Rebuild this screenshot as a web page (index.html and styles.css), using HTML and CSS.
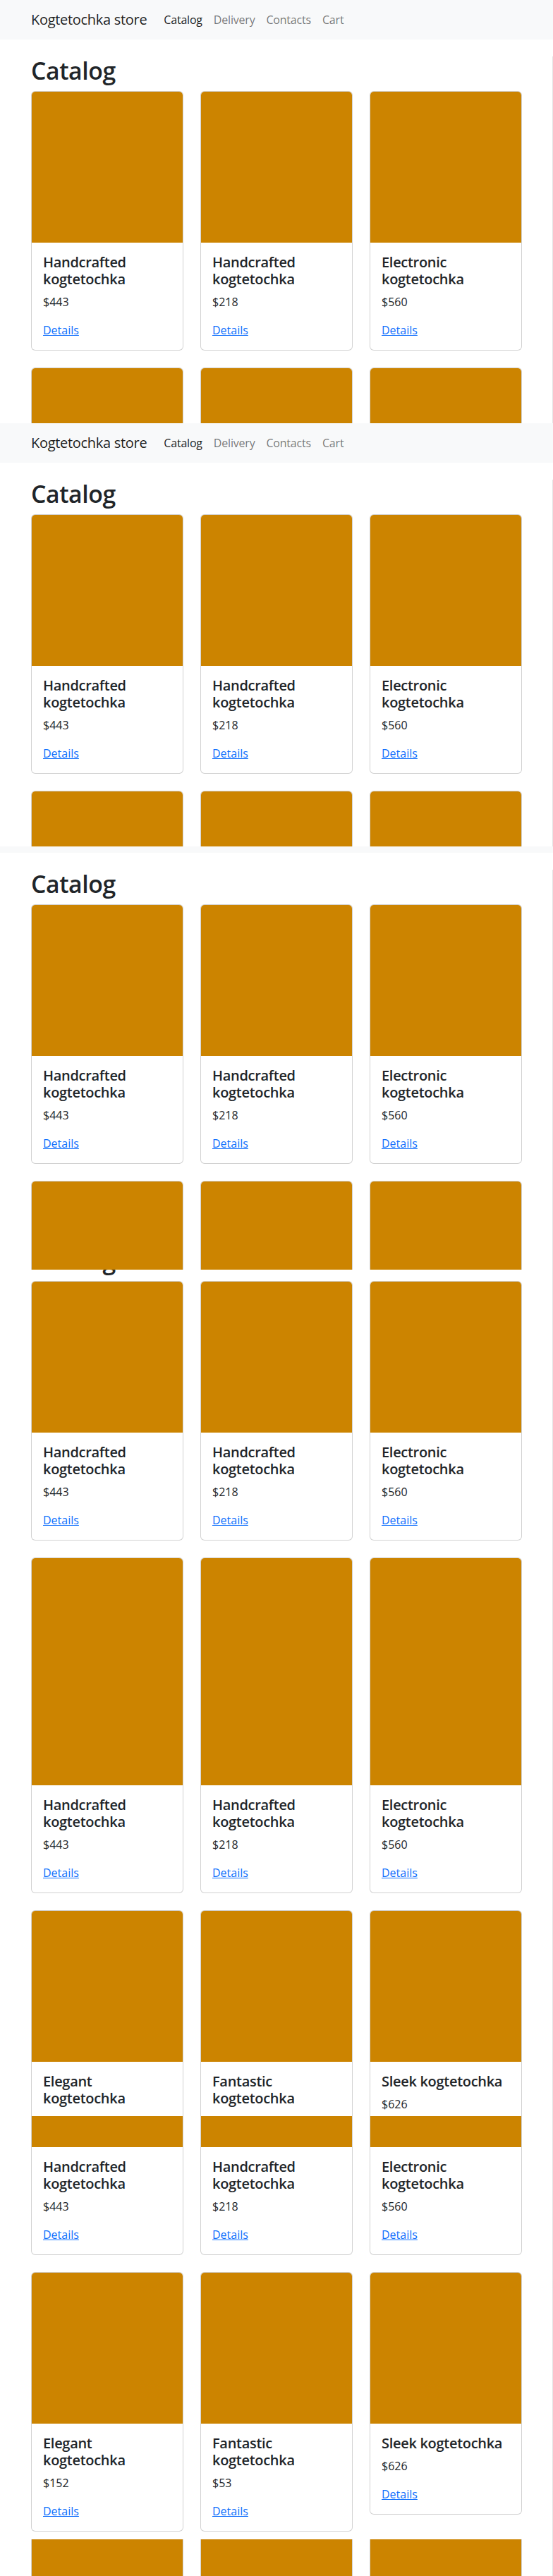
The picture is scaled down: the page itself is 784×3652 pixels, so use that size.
FILE: index.html
```html
<!DOCTYPE html>
<html lang="en">
<head>
<meta charset="utf-8">
<title>Kogtetochka store — Catalog</title>
<link rel="stylesheet" href="styles.css">
</head>
<body>

<!-- capture 1: scrolled to top -->
<div class="shot shot-full">
  <div class="page scroll-0">
    <nav class="navbar"><div class="nav-inner"><a class="brand" href="#">Kogtetochka store</a><ul class="nav-links"><li><a class="nav-link active" href="#">Catalog</a></li><li><a class="nav-link" href="#">Delivery</a></li><li><a class="nav-link" href="#">Contacts</a></li><li><a class="nav-link" href="#">Cart</a></li></ul></div></nav>
    <main class="main-area"><div class="container">
      <h1 class="title">Catalog</h1>
      <div class="grid">
        <div class="card"><div class="card-img"></div><div class="card-body"><h5 class="card-title">Handcrafted kogtetochka</h5><p class="card-price">$443</p><a class="card-link" href="#">Details</a></div></div>
        <div class="card"><div class="card-img"></div><div class="card-body"><h5 class="card-title">Handcrafted kogtetochka</h5><p class="card-price">$218</p><a class="card-link" href="#">Details</a></div></div>
        <div class="card"><div class="card-img"></div><div class="card-body"><h5 class="card-title">Electronic kogtetochka</h5><p class="card-price">$560</p><a class="card-link" href="#">Details</a></div></div>
        <div class="card"><div class="card-img"></div><div class="card-body"><h5 class="card-title">Elegant kogtetochka</h5><p class="card-price">$152</p><a class="card-link" href="#">Details</a></div></div>
        <div class="card"><div class="card-img"></div><div class="card-body"><h5 class="card-title">Fantastic kogtetochka</h5><p class="card-price">$53</p><a class="card-link" href="#">Details</a></div></div>
        <div class="card"><div class="card-img"></div><div class="card-body"><h5 class="card-title">Sleek kogtetochka</h5><p class="card-price">$626</p><a class="card-link" href="#">Details</a></div></div>
      </div>
    </div></main>
  </div>
</div>

<!-- capture 2: scrolled to top -->
<div class="shot shot-full">
  <div class="page scroll-0">
    <nav class="navbar"><div class="nav-inner"><a class="brand" href="#">Kogtetochka store</a><ul class="nav-links"><li><a class="nav-link active" href="#">Catalog</a></li><li><a class="nav-link" href="#">Delivery</a></li><li><a class="nav-link" href="#">Contacts</a></li><li><a class="nav-link" href="#">Cart</a></li></ul></div></nav>
    <main class="main-area"><div class="container">
      <h1 class="title">Catalog</h1>
      <div class="grid">
        <div class="card"><div class="card-img"></div><div class="card-body"><h5 class="card-title">Handcrafted kogtetochka</h5><p class="card-price">$443</p><a class="card-link" href="#">Details</a></div></div>
        <div class="card"><div class="card-img"></div><div class="card-body"><h5 class="card-title">Handcrafted kogtetochka</h5><p class="card-price">$218</p><a class="card-link" href="#">Details</a></div></div>
        <div class="card"><div class="card-img"></div><div class="card-body"><h5 class="card-title">Electronic kogtetochka</h5><p class="card-price">$560</p><a class="card-link" href="#">Details</a></div></div>
        <div class="card"><div class="card-img"></div><div class="card-body"><h5 class="card-title">Elegant kogtetochka</h5><p class="card-price">$152</p><a class="card-link" href="#">Details</a></div></div>
        <div class="card"><div class="card-img"></div><div class="card-body"><h5 class="card-title">Fantastic kogtetochka</h5><p class="card-price">$53</p><a class="card-link" href="#">Details</a></div></div>
        <div class="card"><div class="card-img"></div><div class="card-body"><h5 class="card-title">Sleek kogtetochka</h5><p class="card-price">$626</p><a class="card-link" href="#">Details</a></div></div>
      </div>
    </div></main>
  </div>
</div>

<!-- capture 3: scrolled 47px -->
<div class="shot shot-full">
  <div class="page scroll-47">
    <nav class="navbar"><div class="nav-inner"><a class="brand" href="#">Kogtetochka store</a><ul class="nav-links"><li><a class="nav-link active" href="#">Catalog</a></li><li><a class="nav-link" href="#">Delivery</a></li><li><a class="nav-link" href="#">Contacts</a></li><li><a class="nav-link" href="#">Cart</a></li></ul></div></nav>
    <main class="main-area"><div class="container">
      <h1 class="title">Catalog</h1>
      <div class="grid">
        <div class="card"><div class="card-img"></div><div class="card-body"><h5 class="card-title">Handcrafted kogtetochka</h5><p class="card-price">$443</p><a class="card-link" href="#">Details</a></div></div>
        <div class="card"><div class="card-img"></div><div class="card-body"><h5 class="card-title">Handcrafted kogtetochka</h5><p class="card-price">$218</p><a class="card-link" href="#">Details</a></div></div>
        <div class="card"><div class="card-img"></div><div class="card-body"><h5 class="card-title">Electronic kogtetochka</h5><p class="card-price">$560</p><a class="card-link" href="#">Details</a></div></div>
        <div class="card"><div class="card-img"></div><div class="card-body"><h5 class="card-title">Elegant kogtetochka</h5><p class="card-price">$152</p><a class="card-link" href="#">Details</a></div></div>
        <div class="card"><div class="card-img"></div><div class="card-body"><h5 class="card-title">Fantastic kogtetochka</h5><p class="card-price">$53</p><a class="card-link" href="#">Details</a></div></div>
        <div class="card"><div class="card-img"></div><div class="card-body"><h5 class="card-title">Sleek kogtetochka</h5><p class="card-price">$626</p><a class="card-link" href="#">Details</a></div></div>
      </div>
    </div></main>
  </div>
</div>

<!-- capture 4: scrolled 113px -->
<div class="shot shot-full">
  <div class="page scroll-113">
    <nav class="navbar"><div class="nav-inner"><a class="brand" href="#">Kogtetochka store</a><ul class="nav-links"><li><a class="nav-link active" href="#">Catalog</a></li><li><a class="nav-link" href="#">Delivery</a></li><li><a class="nav-link" href="#">Contacts</a></li><li><a class="nav-link" href="#">Cart</a></li></ul></div></nav>
    <main class="main-area"><div class="container">
      <h1 class="title">Catalog</h1>
      <div class="grid">
        <div class="card"><div class="card-img"></div><div class="card-body"><h5 class="card-title">Handcrafted kogtetochka</h5><p class="card-price">$443</p><a class="card-link" href="#">Details</a></div></div>
        <div class="card"><div class="card-img"></div><div class="card-body"><h5 class="card-title">Handcrafted kogtetochka</h5><p class="card-price">$218</p><a class="card-link" href="#">Details</a></div></div>
        <div class="card"><div class="card-img"></div><div class="card-body"><h5 class="card-title">Electronic kogtetochka</h5><p class="card-price">$560</p><a class="card-link" href="#">Details</a></div></div>
        <div class="card"><div class="card-img"></div><div class="card-body"><h5 class="card-title">Elegant kogtetochka</h5><p class="card-price">$152</p><a class="card-link" href="#">Details</a></div></div>
        <div class="card"><div class="card-img"></div><div class="card-body"><h5 class="card-title">Fantastic kogtetochka</h5><p class="card-price">$53</p><a class="card-link" href="#">Details</a></div></div>
        <div class="card"><div class="card-img"></div><div class="card-body"><h5 class="card-title">Sleek kogtetochka</h5><p class="card-price">$626</p><a class="card-link" href="#">Details</a></div></div>
      </div>
    </div></main>
  </div>
</div>

<!-- capture 5: scrolled 213px -->
<div class="shot shot-full">
  <div class="page scroll-213">
    <nav class="navbar"><div class="nav-inner"><a class="brand" href="#">Kogtetochka store</a><ul class="nav-links"><li><a class="nav-link active" href="#">Catalog</a></li><li><a class="nav-link" href="#">Delivery</a></li><li><a class="nav-link" href="#">Contacts</a></li><li><a class="nav-link" href="#">Cart</a></li></ul></div></nav>
    <main class="main-area"><div class="container">
      <h1 class="title">Catalog</h1>
      <div class="grid">
        <div class="card"><div class="card-img"></div><div class="card-body"><h5 class="card-title">Handcrafted kogtetochka</h5><p class="card-price">$443</p><a class="card-link" href="#">Details</a></div></div>
        <div class="card"><div class="card-img"></div><div class="card-body"><h5 class="card-title">Handcrafted kogtetochka</h5><p class="card-price">$218</p><a class="card-link" href="#">Details</a></div></div>
        <div class="card"><div class="card-img"></div><div class="card-body"><h5 class="card-title">Electronic kogtetochka</h5><p class="card-price">$560</p><a class="card-link" href="#">Details</a></div></div>
        <div class="card"><div class="card-img"></div><div class="card-body"><h5 class="card-title">Elegant kogtetochka</h5><p class="card-price">$152</p><a class="card-link" href="#">Details</a></div></div>
        <div class="card"><div class="card-img"></div><div class="card-body"><h5 class="card-title">Fantastic kogtetochka</h5><p class="card-price">$53</p><a class="card-link" href="#">Details</a></div></div>
        <div class="card"><div class="card-img"></div><div class="card-body"><h5 class="card-title">Sleek kogtetochka</h5><p class="card-price">$626</p><a class="card-link" href="#">Details</a></div></div>
      </div>
    </div></main>
  </div>
</div>

<!-- capture 6: scrolled 300px -->
<div class="shot shot-full">
  <div class="page scroll-300">
    <nav class="navbar"><div class="nav-inner"><a class="brand" href="#">Kogtetochka store</a><ul class="nav-links"><li><a class="nav-link active" href="#">Catalog</a></li><li><a class="nav-link" href="#">Delivery</a></li><li><a class="nav-link" href="#">Contacts</a></li><li><a class="nav-link" href="#">Cart</a></li></ul></div></nav>
    <main class="main-area"><div class="container">
      <h1 class="title">Catalog</h1>
      <div class="grid">
        <div class="card"><div class="card-img"></div><div class="card-body"><h5 class="card-title">Handcrafted kogtetochka</h5><p class="card-price">$443</p><a class="card-link" href="#">Details</a></div></div>
        <div class="card"><div class="card-img"></div><div class="card-body"><h5 class="card-title">Handcrafted kogtetochka</h5><p class="card-price">$218</p><a class="card-link" href="#">Details</a></div></div>
        <div class="card"><div class="card-img"></div><div class="card-body"><h5 class="card-title">Electronic kogtetochka</h5><p class="card-price">$560</p><a class="card-link" href="#">Details</a></div></div>
        <div class="card"><div class="card-img"></div><div class="card-body"><h5 class="card-title">Elegant kogtetochka</h5><p class="card-price">$152</p><a class="card-link" href="#">Details</a></div></div>
        <div class="card"><div class="card-img"></div><div class="card-body"><h5 class="card-title">Fantastic kogtetochka</h5><p class="card-price">$53</p><a class="card-link" href="#">Details</a></div></div>
        <div class="card"><div class="card-img"></div><div class="card-body"><h5 class="card-title">Sleek kogtetochka</h5><p class="card-price">$626</p><a class="card-link" href="#">Details</a></div></div>
      </div>
    </div></main>
  </div>
</div>

<!-- capture 7: scrolled into the third row of cards -->
<div class="shot shot-tail">
  <div class="page scroll-960">
    <nav class="navbar"><div class="nav-inner"><a class="brand" href="#">Kogtetochka store</a><ul class="nav-links"><li><a class="nav-link active" href="#">Catalog</a></li><li><a class="nav-link" href="#">Delivery</a></li><li><a class="nav-link" href="#">Contacts</a></li><li><a class="nav-link" href="#">Cart</a></li></ul></div></nav>
    <main class="main-area"><div class="container">
      <h1 class="title">Catalog</h1>
      <div class="grid">
        <div class="card"><div class="card-img"></div><div class="card-body"><h5 class="card-title">Handcrafted kogtetochka</h5><p class="card-price">$443</p><a class="card-link" href="#">Details</a></div></div>
        <div class="card"><div class="card-img"></div><div class="card-body"><h5 class="card-title">Handcrafted kogtetochka</h5><p class="card-price">$218</p><a class="card-link" href="#">Details</a></div></div>
        <div class="card"><div class="card-img"></div><div class="card-body"><h5 class="card-title">Electronic kogtetochka</h5><p class="card-price">$560</p><a class="card-link" href="#">Details</a></div></div>
        <div class="card"><div class="card-img"></div><div class="card-body"><h5 class="card-title">Elegant kogtetochka</h5><p class="card-price">$152</p><a class="card-link" href="#">Details</a></div></div>
        <div class="card"><div class="card-img"></div><div class="card-body"><h5 class="card-title">Fantastic kogtetochka</h5><p class="card-price">$53</p><a class="card-link" href="#">Details</a></div></div>
        <div class="card"><div class="card-img"></div><div class="card-body"><h5 class="card-title">Sleek kogtetochka</h5><p class="card-price">$626</p><a class="card-link" href="#">Details</a></div></div>
        <div class="card"><div class="card-img"></div><div class="card-body"><h5 class="card-title">Rustic kogtetochka</h5><p class="card-price">$310</p><a class="card-link" href="#">Details</a></div></div>
        <div class="card"><div class="card-img"></div><div class="card-body"><h5 class="card-title">Modern kogtetochka</h5><p class="card-price">$97</p><a class="card-link" href="#">Details</a></div></div>
        <div class="card"><div class="card-img"></div><div class="card-body"><h5 class="card-title">Cozy kogtetochka</h5><p class="card-price">$415</p><a class="card-link" href="#">Details</a></div></div>
      </div>
    </div></main>
  </div>
</div>

</body>
</html>
```

FILE: styles.css
```css
* {
  box-sizing: border-box;
}

html, body {
  margin: 0;
  padding: 0;
}

body {
  font-family: "Open Sans", "Noto Sans", "Liberation Sans", Arial, sans-serif;
  font-size: 16px;
  line-height: 1.5;
  color: #212529;
  background: #fff;
}

/* each capture is one 600px-tall viewport of the scrolled page */
.shot {
  overflow: hidden;
  width: 784px;
}

.shot-full {
  height: 600px;
}

.shot-tail {
  height: 52px;
}

.page.scroll-0 { margin-top: 0; }
.page.scroll-47 { margin-top: -47px; }
.page.scroll-113 { margin-top: -113px; }
.page.scroll-213 { margin-top: -213px; }
.page.scroll-300 { margin-top: -300px; }
.page.scroll-960 { margin-top: -960px; }

/* navbar */
.navbar {
  background: #f8f9fa;
  height: 56px;
  padding: 8px 0;
}

.nav-inner {
  width: 720px;
  margin: 0 auto;
  padding: 0 12px;
  display: flex;
  align-items: center;
}

.brand {
  display: block;
  font-size: 20px;
  line-height: 30px;
  padding: 5px 0;
  margin-right: 16px;
  color: rgba(0, 0, 0, 0.9);
  text-decoration: none;
  white-space: nowrap;
  letter-spacing: -0.3px;
}

.nav-links {
  display: flex;
  list-style: none;
  margin: 0;
  padding: 0;
}

.nav-link {
  display: block;
  padding: 8px;
  line-height: 24px;
  color: rgba(0, 0, 0, 0.55);
  text-decoration: none;
  letter-spacing: -0.2px;
}

.nav-link.active {
  color: rgba(0, 0, 0, 0.9);
}

/* content */
.main-area {
  box-shadow: inset -1px 0 0 #e4e4e4;
  padding-bottom: 400px;
}

.container {
  width: 720px;
  margin: 0 auto;
  padding: 0 12px;
}

.title {
  font-size: 33.76px;
  line-height: 1.2;
  font-weight: 600;
  letter-spacing: -0.4px;
  margin: 24px 0 8px;
  color: #212529;
}

.grid {
  display: grid;
  grid-template-columns: repeat(3, 216px);
  column-gap: 24px;
  row-gap: 24px;
  align-items: start;
}

.card {
  background: #fff;
  border: 1px solid rgba(0, 0, 0, 0.175);
  border-radius: 6px;
}

.card-img {
  height: 214px;
  background: #cc8400;
  border-radius: 5px 5px 0 0;
}

.card-body {
  padding: 16px;
}

.card-title {
  font-size: 20px;
  line-height: 24px;
  font-weight: 600;
  letter-spacing: -0.3px;
  margin: 0 0 8px;
  color: #212529;
}

.card-price {
  margin: 0 0 16px;
  line-height: 24px;
}

.card-link {
  color: #0d6efd;
  text-decoration: underline;
}
```
